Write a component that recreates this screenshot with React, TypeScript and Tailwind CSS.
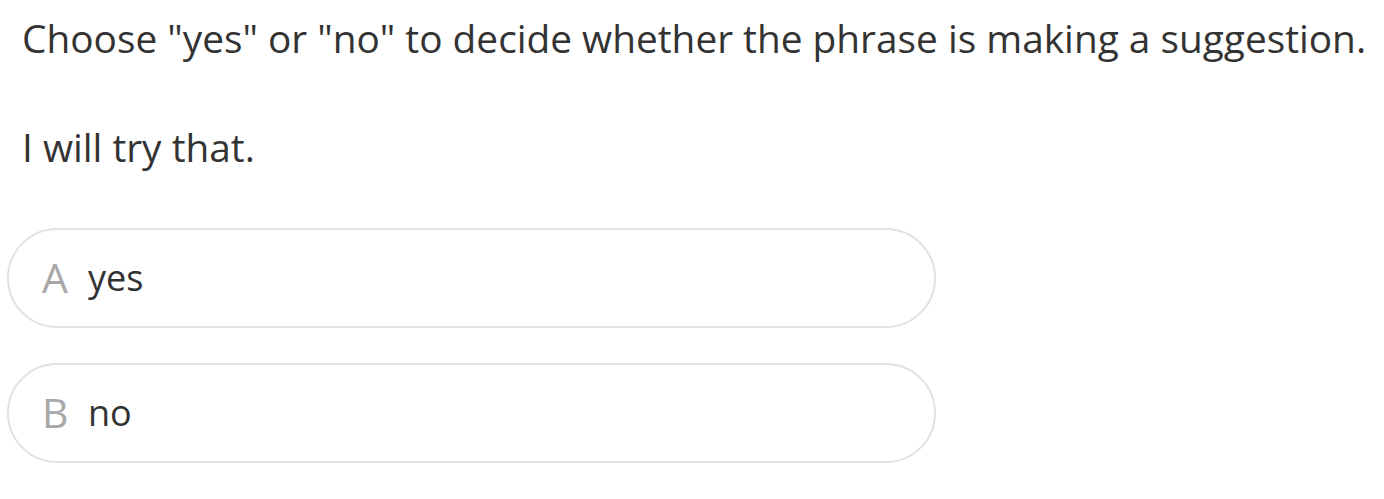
import React from "react";

export default function App() {
  const options = [
    { letter: "A", text: "yes" },
    { letter: "B", text: "no" },
  ];
  return (
    <div className="w-[1384px] h-[499px] bg-white text-[#333333] font-['Open_Sans',sans-serif] overflow-hidden">
      <div className="pl-[22px] pt-[14px]">
        <p className="text-[38.8px] leading-[48px] whitespace-nowrap">
          Choose "yes" or "no" to decide whether the phrase is making a suggestion.
        </p>
        <p className="text-[38.8px] leading-[48px] mt-[61px] whitespace-nowrap">I will try that.</p>
      </div>
      <div className="pl-[7px] mt-[57px] flex flex-col gap-[35px]">
        {options.map((o) => (
          <div
            key={o.letter}
            className="w-[929px] h-[100px] rounded-full border-2 border-[#e2e2e2] flex items-center pl-[33px]"
          >
            <span className="text-[41px] text-[#a8a8a8] w-[46px]">{o.letter}</span>
            <span className="text-[36px]">{o.text}</span>
          </div>
        ))}
      </div>
    </div>
  );
}
